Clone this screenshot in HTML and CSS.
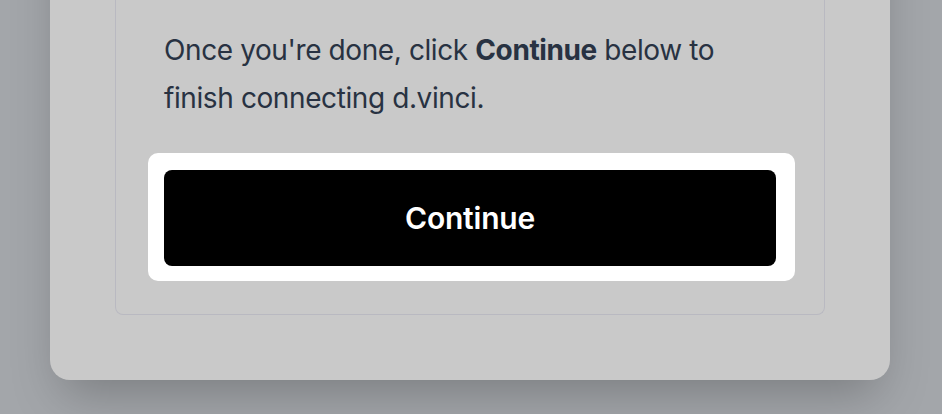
FILE: index.html
```html
<!DOCTYPE html>
<html lang="en">
<head>
    <meta charset="UTF-8">
    <meta name="viewport" content="width=device-width, initial-scale=1.0">
    <title>Connect d.vinci</title>
    <link rel="stylesheet" href="styles.css">
</head>
<body>
    <div class="stage">
        <div class="modal">
            <div class="panel">
                <p class="note">Once you're done, click <strong>Continue</strong> below to finish connecting d.vinci.</p>
                <div class="spotlight">
                    <button class="btn">Continue</button>
                </div>
            </div>
        </div>
    </div>
</body>
</html>
```

FILE: styles.css
```css
body {
    margin: 0;
    background: #a3a6aa;
    font-family: Inter, "Noto Sans", sans-serif;
    overflow: hidden;
}
.stage {
    height: 414px;
    display: flex;
    align-items: flex-end;
    padding: 0 52px 34px 50px;
    box-sizing: border-box;
}
.modal {
    flex: 1;
    background: #c9c9c9;
    border-radius: 0 0 20px 20px;
    padding: 0 65px 65px;
    box-shadow: 0 25px 50px -12px rgba(0,0,0,0.25);
}
.panel {
    border: 1px solid #b9b9c1;
    border-top: none;
    border-radius: 0 0 8px 8px;
    padding: 120px 48px 33px;
}
.note {
    margin: 0;
    font-size: 28px;
    line-height: 48px;
    letter-spacing: -0.4px;
    color: #283242;
}
.note strong {
    font-weight: 700;
}
.spotlight {
    background: #fff;
    border-radius: 10px;
    margin: 31px -19px 0 -16px;
    padding: 17px 19px 15px 16px;
}
.btn {
    display: block;
    width: 100%;
    height: 96px;
    border: none;
    border-radius: 8px;
    background: #000;
    color: #fff;
    font-family: Inter, "Noto Sans", sans-serif;
    font-size: 30px;
    font-weight: 600;
    letter-spacing: -0.2px;
    cursor: pointer;
}
```
